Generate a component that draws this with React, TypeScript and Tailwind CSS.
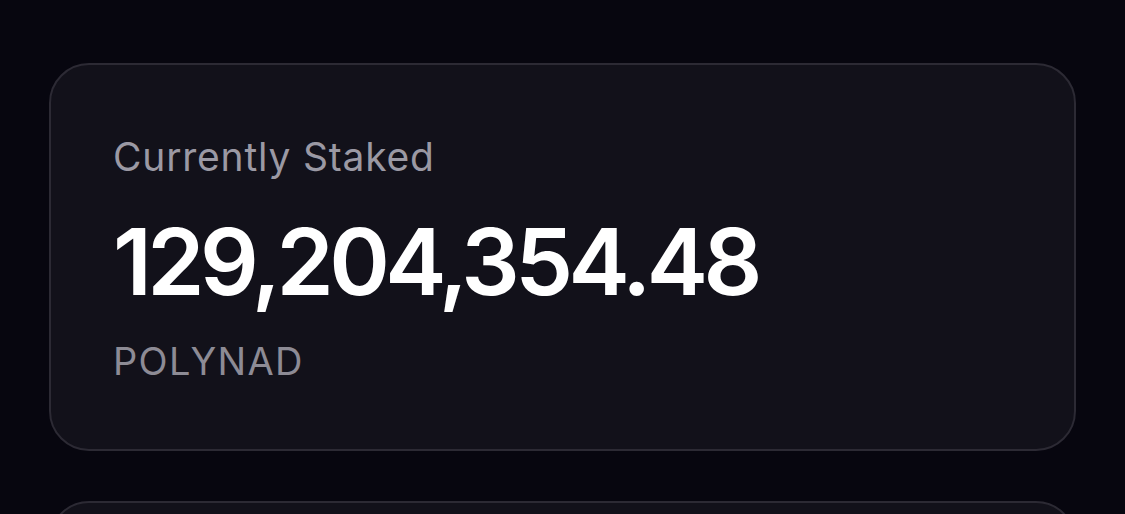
export default function App() {
  return (
    <div
      className="h-[514px] w-full overflow-hidden bg-[#07060f] px-[49px] pt-[63px]"
      style={{ fontFamily: 'Inter, "Noto Sans", sans-serif' }}
    >
      <div className="flex flex-col gap-[50px]">
        <div className="h-[388px] rounded-[40px] border-2 border-[#2c2a34] bg-[#12111a] pl-[62px] pt-[72px]">
          <p className="text-[39px] leading-none tracking-[0.8px] text-[#9b99a4]">Currently Staked</p>
          <p className="mt-[40px] text-[92px] font-semibold leading-none tracking-[-4.6px] text-white">129,204,354.48</p>
          <p className="mt-[34px] text-[38px] leading-none tracking-[1.3px] text-[#8d8b95]">POLYNAD</p>
        </div>
        <div className="h-[200px] rounded-[40px] border-2 border-[#2c2a34] bg-[#12111a]" />
      </div>
    </div>
  );
}
